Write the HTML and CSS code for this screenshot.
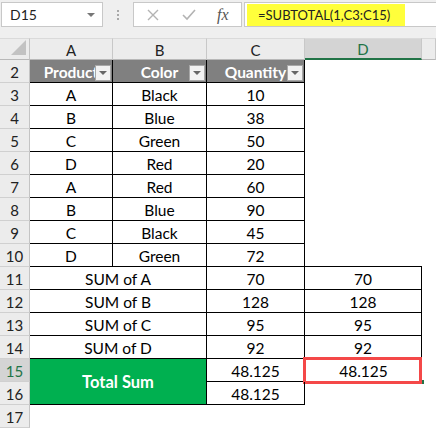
FILE: index.html
```html
<!DOCTYPE html>
<html lang="en">
<head>
    <meta charset="UTF-8">
    <title>SUBTOTAL</title>
    <link rel="stylesheet" href="styles.css">
</head>
<body>

    <!-- Formula bar -->
    <div class="toolbar">
        <div class="name-box">
            <span>D15</span>
            <span class="drop"></span>
        </div>
        <div class="grip"><i></i><i></i><i></i></div>
        <div class="edit-box">
            <svg width="12" height="12" viewBox="0 0 12 12"><path d="M1 1 L11 11 M11 1 L1 11" stroke="#b3b3b3" stroke-width="1.4" fill="none"/></svg>
            <svg width="14" height="12" viewBox="0 0 14 12"><path d="M1 6 L5 10 L13 1" stroke="#b3b3b3" stroke-width="1.6" fill="none"/></svg>
            <span class="fx">fx</span>
        </div>
        <div class="formula">
            <span class="hl">=SUBTOTAL(1,C3:C15)</span>
        </div>
    </div>

    <!-- Sheet -->
    <div class="sheet">
        <div class="corner"></div>
        <div class="col">A</div>
        <div class="col">B</div>
        <div class="col">C</div>
        <div class="col sel">D</div>
        <div class="col"></div>

        <div class="rh">2</div>
        <div class="th">Product<span class="flt"></span></div>
        <div class="th">Color<span class="flt"></span></div>
        <div class="th">Quantity<span class="flt"></span></div>
        <div class="e"></div>
        <div class="e"></div>

        <div class="rh">3</div><div class="c">A</div><div class="c">Black</div><div class="c">10</div><div class="e"></div><div class="e"></div>
        <div class="rh">4</div><div class="c">B</div><div class="c">Blue</div><div class="c">38</div><div class="e"></div><div class="e"></div>
        <div class="rh">5</div><div class="c">C</div><div class="c">Green</div><div class="c">50</div><div class="e"></div><div class="e"></div>
        <div class="rh">6</div><div class="c">D</div><div class="c">Red</div><div class="c">20</div><div class="e"></div><div class="e"></div>
        <div class="rh">7</div><div class="c">A</div><div class="c">Red</div><div class="c">60</div><div class="e"></div><div class="e"></div>
        <div class="rh">8</div><div class="c">B</div><div class="c">Blue</div><div class="c">90</div><div class="e"></div><div class="e"></div>
        <div class="rh">9</div><div class="c">C</div><div class="c">Black</div><div class="c">45</div><div class="e"></div><div class="e"></div>
        <div class="rh">10</div><div class="c">D</div><div class="c">Green</div><div class="c">72</div><div class="e line"></div><div class="e"></div>

        <div class="rh">11</div><div class="c span2">SUM of A</div><div class="c">70</div><div class="c">70</div><div class="e"></div>
        <div class="rh">12</div><div class="c span2">SUM of B</div><div class="c">128</div><div class="c">128</div><div class="e"></div>
        <div class="rh">13</div><div class="c span2">SUM of C</div><div class="c">95</div><div class="c">95</div><div class="e"></div>
        <div class="rh">14</div><div class="c span2">SUM of D</div><div class="c">92</div><div class="c">92</div><div class="e"></div>

        <div class="rh sel">15</div><div class="c span2 total">Total Sum</div><div class="c">48.125</div><div class="e active">48.125</div><div class="e"></div>
        <div class="rh">16</div><div class="c">48.125</div><div class="e"></div><div class="e"></div>
        <div class="rh">17</div><div class="e"></div><div class="e"></div><div class="e"></div><div class="e"></div><div class="e"></div>
    </div>

</body>
</html>
```

FILE: styles.css
```css
body {
    margin: 0;
    width: 436px;
    height: 429px;
    overflow: hidden;
    background-color: #fff;
    font-family: Lato, "Liberation Sans", sans-serif;
    color: #000;
}

/* formula bar */
.toolbar {
    display: flex;
    align-items: flex-start;
    height: 38px;
    padding-top: 2px;
    box-sizing: border-box;
    background-color: #efefef;
    overflow: hidden;
}
.name-box {
    position: relative;
    margin-left: 1px;
    width: 102px;
    height: 25px;
    box-sizing: border-box;
    background-color: #fff;
    border: 1px solid #c8c8c8;
    font-size: 14px;
    line-height: 23px;
    padding-left: 8px;
    color: #222;
}
.drop {
    position: absolute;
    right: 7px;
    top: 10px;
    border-left: 4px solid transparent;
    border-right: 4px solid transparent;
    border-top: 4px solid #777;
}
.grip {
    width: 30px;
    display: flex;
    flex-direction: column;
    align-items: center;
    gap: 2px;
    padding-top: 8px;
}
.grip i {
    width: 2px;
    height: 2px;
    background-color: #a8a8a8;
}
.edit-box {
    width: 109px;
    height: 25px;
    box-sizing: border-box;
    background-color: #fff;
    border: 1px solid #c8c8c8;
    display: flex;
    align-items: center;
    padding-left: 13px;
    gap: 23px;
}
.fx {
    font-family: "Liberation Serif", serif;
    font-style: italic;
    font-size: 16px;
    color: #555;
    margin-left: -2px;
}
.formula {
    margin-left: 2px;
    flex: 1;
    height: 25px;
    box-sizing: border-box;
    background-color: #fff;
    border: 1px solid #c8c8c8;
    border-right: none;
    padding: 1px 0 0 2px;
}
.hl {
    display: block;
    width: 147px;
    height: 22px;
    padding-left: 11px;
    background-color: #ffff3b;
    font-size: 13px;
    line-height: 22px;
    color: #222;
}

/* sheet */
.sheet {
    display: grid;
    grid-template-columns: 30px 83px 94px 98px 117px 14px;
    grid-template-rows: 22px;
    grid-auto-rows: 23px;
    font-size: 15.5px;
}
.sheet > div {
    box-sizing: border-box;
    display: flex;
    align-items: center;
    justify-content: center;
    position: relative;
    white-space: nowrap;
    padding-top: 1px;
}
.corner {
    background-color: #ececec;
    border-right: 1px solid #c4c4c4;
    border-bottom: 1px solid #b8b8b8;
    border-top: 1px solid #dadada;
}
.corner::after {
    content: "";
    position: absolute;
    right: 3px;
    bottom: 4px;
    border-left: 15px solid transparent;
    border-bottom: 15px solid #c2c2c2;
}
.col {
    background-color: #ececec;
    border-right: 1px solid #c8c8c8;
    border-bottom: 1px solid #b8b8b8;
    border-top: 1px solid #dadada;
    color: #222;
    font-size: 15px;
}
.col.sel {
    background-color: #d4d4d4;
    color: #217346;
    border-bottom: 2px solid #217346;
}
.rh {
    background-color: #ececec;
    border-right: 1px solid #c4c4c4;
    border-bottom: 1px solid #d0d0d0;
    color: #222;
    font-size: 15px;
}
.rh.sel {
    background-color: #d4d4d4;
    color: #217346;
}
.th {
    background-color: #808080;
    color: #fff;
    font-weight: bold;
    border-right: 1px solid #000;
    border-bottom: 1px solid #000;
    overflow: hidden;
}
.flt {
    position: absolute;
    right: 1px;
    bottom: 1px;
    width: 16px;
    height: 16px;
    box-sizing: border-box;
    background-color: #f2f2f2;
    border: 1px solid #a8a8a8;
}
.flt::after {
    content: "";
    position: absolute;
    left: 3px;
    top: 5px;
    border-left: 4px solid transparent;
    border-right: 4px solid transparent;
    border-top: 4px solid #666;
}
.c {
    border-right: 1px solid #000;
    border-bottom: 1px solid #000;
}
.e.line {
    border-bottom: 1px solid #000;
}
.span2 {
    grid-column: span 2;
}
.total {
    grid-row: span 2;
    background-color: #00b050;
    color: #fff;
    font-weight: bold;
    font-size: 16.5px;
}
.active::after {
    content: "";
    position: absolute;
    left: -2px;
    top: -2px;
    right: 0;
    bottom: -2px;
    border: 3px solid #f44848;
}
.active::before {
    content: "";
    position: absolute;
    right: -2px;
    bottom: -2px;
    width: 3px;
    height: 4px;
    background-color: #217346;
}
```
